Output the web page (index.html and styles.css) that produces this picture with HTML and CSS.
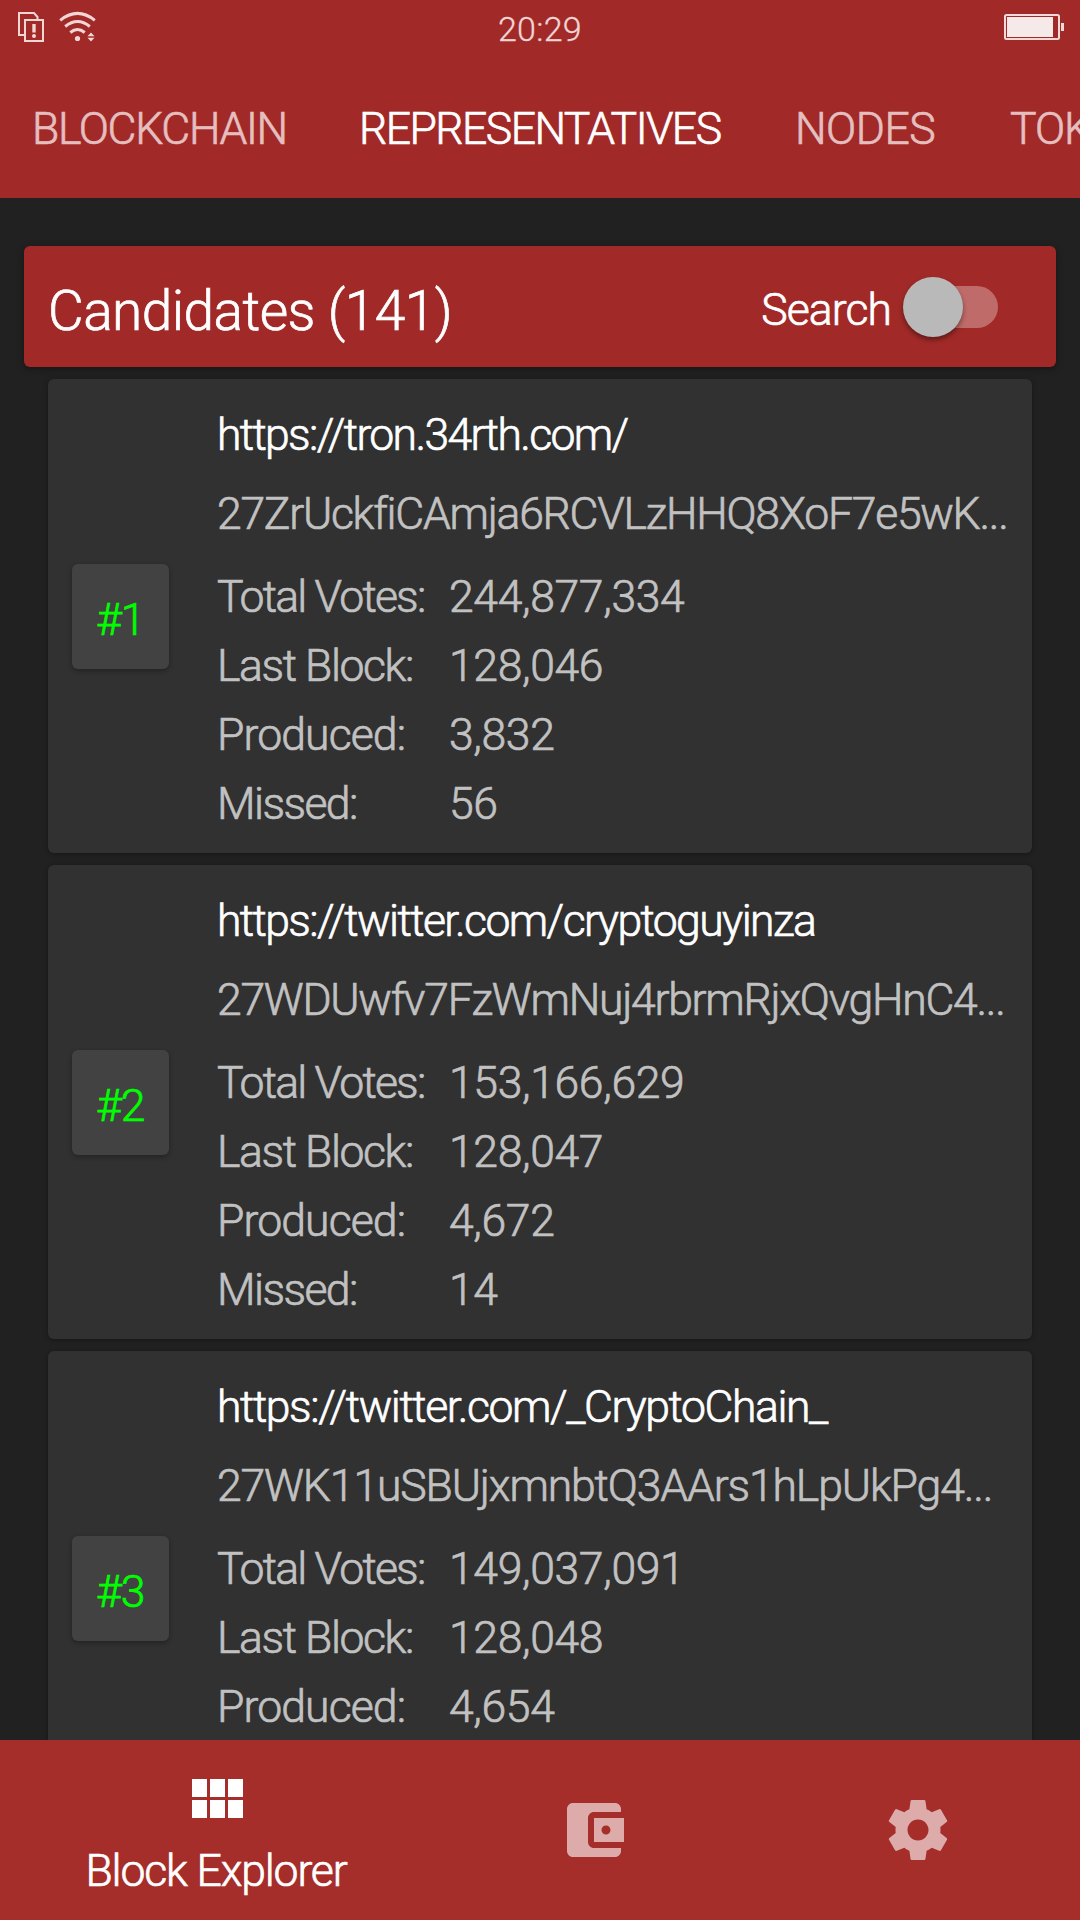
FILE: index.html
```html
<!DOCTYPE html>
<html lang="en">
<head>
<meta charset="utf-8">
<title>Block Explorer</title>
<link rel="stylesheet" href="styles.css">
</head>
<body>
<div class="app">
  <header class="app-header">
    <div class="status-bar">
      <svg class="status-icons" width="84" height="36" viewBox="16 8 84 36" fill="none" stroke="currentColor" stroke-width="2">
        <path d="M24 35H19V13h15l3.500 4v2.500M25 20h18v21H25z"/>
        <path d="M34 24v8.500" stroke-width="3.400"/>
        <circle cx="34" cy="36" r="2" fill="currentColor" stroke="none"/>
        <path d="M60.200 20.300Q77.500 6.500 94.800 20.300M65.200 26.500Q77.500 16.500 89.800 26.500M70.300 32.500Q77.500 26.500 84.700 32.500" stroke-width="3"/>
        <circle cx="77.500" cy="38.500" r="2.600" fill="currentColor" stroke="none"/>
        <path d="M87.500 36.300L91 32.500l3.500 3.800zM87.500 37.800L91 41.500l3.500-3.700z" fill="currentColor" stroke="none"/>
      </svg>
      <span class="clock">20:29</span>
      <svg class="battery" width="60" height="26" viewBox="0 0 60 26">
        <rect x="1" y="1" width="54" height="24" rx="1.500" fill="none" stroke="#f1d9d9" stroke-width="2"/>
        <rect x="3" y="3" width="46" height="20" fill="#f6e9e9"/>
        <rect x="57" y="9" width="3" height="8" fill="#f1d9d9"/>
      </svg>
    </div>
    <nav class="tabs">
      <span class="tab tab-blockchain">BLOCKCHAIN</span>
      <span class="tab tab-representatives active">REPRESENTATIVES</span>
      <span class="tab tab-nodes">NODES</span>
      <span class="tab tab-tokens">TOKENS</span>
    </nav>
  </header>

  <main class="content">
    <section class="list-header">
      <h1 class="list-title">Candidates (141)</h1>
      <span class="search-label">Search</span>
      <span class="switch"><span class="switch-thumb"></span></span>
    </section>

    <article class="card">
      <div class="rank">#1</div>
      <div class="details">
        <div class="url url-short">https://tron.34rth.com/</div>
        <div class="address">27ZrUckfiCAmja6RCVLzHHQ8XoF7e5wK...</div>
        <dl class="stats">
          <dt class="votes">Total Votes:</dt><dd>244,877,334</dd>
          <dt class="last">Last Block:</dt><dd>128,046</dd>
          <dt class="produced">Produced:</dt><dd>3,832</dd>
          <dt class="missed">Missed:</dt><dd>56</dd>
        </dl>
      </div>
    </article>

    <article class="card">
      <div class="rank">#2</div>
      <div class="details">
        <div class="url">https://twitter.com/cryptoguyinza</div>
        <div class="address">27WDUwfv7FzWmNuj4rbrmRjxQvgHnC4...</div>
        <dl class="stats">
          <dt class="votes">Total Votes:</dt><dd>153,166,629</dd>
          <dt class="last">Last Block:</dt><dd>128,047</dd>
          <dt class="produced">Produced:</dt><dd>4,672</dd>
          <dt class="missed">Missed:</dt><dd>14</dd>
        </dl>
      </div>
    </article>

    <article class="card">
      <div class="rank">#3</div>
      <div class="details">
        <div class="url url-long">https://twitter.com/_CryptoChain_</div>
        <div class="address address-narrow">27WK11uSBUjxmnbtQ3AArs1hLpUkPg4...</div>
        <dl class="stats">
          <dt class="votes">Total Votes:</dt><dd>149,037,091</dd>
          <dt class="last">Last Block:</dt><dd>128,048</dd>
          <dt class="produced">Produced:</dt><dd>4,654</dd>
        </dl>
      </div>
    </article>
  </main>

  <nav class="bottom-nav">
    <div class="nav-item active">
      <svg width="72" height="72" viewBox="0 0 24 24" fill="currentColor"><path d="M4 11h5V5H4v6zm0 7h5v-6H4v6zm6 0h5v-6h-5v6zm6 0h5v-6h-5v6zm-6-7h5V5h-5v6zm6-6v6h5V5h-5z"/></svg>
      <span class="nav-label">Block Explorer</span>
    </div>
    <div class="nav-item">
      <svg width="72" height="72" viewBox="0 0 24 24" fill="currentColor"><path d="M21 18v1c0 1.100-.9 2-2 2H5c-1.110 0-2-.9-2-2V5c0-1.100.89-2 2-2h14c1.100 0 2 .9 2 2v1h-9c-1.110 0-2 .9-2 2v8c0 1.100.89 2 2 2h9zm-9-2h10V8H12v8zm4-2.500c-.83 0-1.500-.67-1.500-1.500s.67-1.500 1.500-1.500 1.500.67 1.500 1.500-.67 1.500-1.500 1.500z"/></svg>
    </div>
    <div class="nav-item">
      <svg width="72" height="72" viewBox="0 0 24 24" fill="currentColor"><path d="M19.430 12.980c.04-.32.07-.64.07-.98s-.03-.66-.07-.98l2.110-1.650c.19-.15.24-.42.12-.64l-2-3.460c-.12-.22-.39-.3-.61-.22l-2.490 1c-.52-.4-1.080-.73-1.690-.98l-.38-2.650C14.460 2.180 14.250 2 14 2h-4c-.25 0-.46.18-.49.42l-.38 2.650c-.61.25-1.170.59-1.690.98l-2.490-1c-.23-.09-.49 0-.61.22l-2 3.460c-.13.22-.07.49.12.64l2.110 1.650c-.04.32-.07.65-.07.98s.03.66.07.98l-2.110 1.650c-.19.15-.24.42-.12.64l2 3.460c.12.22.39.3.61.22l2.490-1c.52.4 1.080.73 1.690.98l.38 2.650c.03.24.24.42.49.42h4c.25 0 .46-.18.49-.42l.38-2.650c.61-.25 1.170-.59 1.690-.98l2.490 1c.23.09.49 0 .61-.22l2-3.460c.12-.22.07-.49-.12-.64l-2.110-1.650zM12 15.500c-1.930 0-3.500-1.570-3.500-3.500s1.570-3.500 3.500-3.500 3.500 1.570 3.500 3.500-1.570 3.500-3.500 3.500z"/></svg>
    </div>
  </nav>
</div>
</body>
</html>
```
FILE: styles.css
```css
* {
  box-sizing: border-box;
}

body {
  margin: 0;
  background: #212121;
  color: #fff;
  font-family: Roboto, "Liberation Sans", sans-serif;
  font-size: 44.500px;
  font-weight: 300;
  line-height: 69px;
  -webkit-text-stroke: 0.700px currentColor;
}

.app {
  display: flex;
  flex-direction: column;
  height: 1920px;
  overflow: hidden;
}

/* Top bar */
.app-header {
  flex: none;
  height: 198px;
  background: #a12a28;
}

.status-bar {
  display: grid;
  grid-template-columns: 1fr auto 1fr;
  height: 59px;
  padding: 0 16px;
  color: #f1d6d6;
}

.status-icons {
  margin-top: 8px;
}

.clock {
  font-size: 34px;
  line-height: 59px;
  letter-spacing: 0.300px;
  -webkit-text-stroke-width: 0.300px;
}

.battery {
  justify-self: end;
  margin-top: 14px;
}

.tabs {
  display: grid;
  grid-template-columns: 327px 436px 215px 200px;
  height: 139px;
  padding-left: 32px;
  overflow: hidden;
  line-height: 140px;
}

.tab {
  color: #e5bfbf;
  white-space: nowrap;
}

.tab.active {
  color: #fff;
}

.tab-blockchain { letter-spacing: -1.300px; }
.tab-representatives { letter-spacing: -1.550px; }
.tab-nodes { letter-spacing: -0.500px; }
.tab-tokens { letter-spacing: -1px; }

/* Candidate list */
.content {
  flex: 1;
  min-height: 0;
  padding: 48px 24px 0;
  overflow: hidden;
}

.list-header {
  display: flex;
  align-items: center;
  height: 121px;
  padding: 0 58px 0 24px;
  border-radius: 6px;
  background: #a12a28;
  box-shadow: 0 2px 7px rgba(0, 0, 0, 0.35);
}

.list-title {
  flex: 1;
  margin: 0;
  padding-top: 10px;
  font-size: 55px;
  font-weight: 300;
  letter-spacing: -0.550px;
}

.search-label {
  padding-top: 7px;
  letter-spacing: -0.900px;
}

.switch {
  display: flex;
  align-items: center;
  width: 78px;
  height: 42px;
  margin-left: 29px;
  border-radius: 21px;
  background: #bf6b69;
}

.switch-thumb {
  flex: none;
  width: 60px;
  height: 60px;
  margin-left: -17px;
  border-radius: 50%;
  background: #b9b9b9;
  box-shadow: 0 3px 5px rgba(0, 0, 0, 0.4);
}

.card {
  display: flex;
  height: 474px;
  margin: 12px 24px 0;
  padding: 22px 24px 0;
  border-radius: 6px;
  background: #313131;
  box-shadow: 0 1px 5px rgba(0, 0, 0, 0.35);
}

.rank {
  flex: none;
  width: 97px;
  height: 105px;
  margin: 163px 48px 0 0;
  padding-left: 24px;
  border-radius: 6px;
  background: #424242;
  box-shadow: 0 2px 5px rgba(0, 0, 0, 0.3);
  color: #0f0;
  line-height: 112px;
  letter-spacing: -1.200px;
}

.details {
  color: #c1c1c1;
  white-space: nowrap;
}

.url {
  margin-bottom: 10px;
  color: #fff;
  letter-spacing: -1.600px;
}

.url-short { letter-spacing: -1.670px; }
.url-long { letter-spacing: -1.420px; }

.address {
  letter-spacing: -1.270px;
}

.address-narrow { letter-spacing: -1.130px; }

.stats {
  display: grid;
  grid-template-columns: 232px auto;
  margin: 14px 0 0;
}

.stats dd {
  margin: 0;
  letter-spacing: -0.350px;
}

.votes { letter-spacing: -1.800px; }
.last { letter-spacing: -1.400px; }
.produced { letter-spacing: -0.880px; }
.missed { letter-spacing: -1.550px; }

/* Bottom navigation */
.bottom-nav {
  display: grid;
  flex: none;
  grid-template-columns: 432px 324px 324px;
  height: 180px;
  background: #a52e2b;
}

.nav-item {
  display: flex;
  flex-direction: column;
  align-items: center;
  justify-content: center;
  color: #dcabaa;
}

.nav-item.active {
  justify-content: flex-start;
  padding-top: 24px;
  color: #fff;
}

.nav-label {
  margin-top: 10px;
  line-height: 50px;
  letter-spacing: -1.130px;
}
```
